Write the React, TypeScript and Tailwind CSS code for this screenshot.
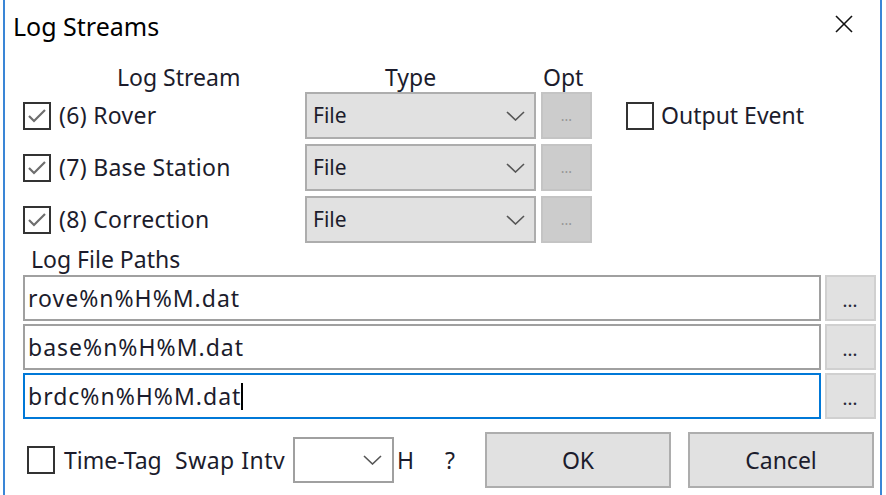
import React from "react";

const font = { fontFamily: '"Noto Sans", "Open Sans", sans-serif' };

function CheckBox({ checked }: { checked?: boolean }) {
    return (
        <div className="w-[28px] h-[28px] border-2 border-[#333333] bg-white flex items-center justify-center shrink-0">
            {checked && (
                <svg width="24" height="24" viewBox="0 0 24 24">
                    <polyline
                        points="4,12 9,17 20,6"
                        fill="none"
                        stroke="#6e6e6e"
                        strokeWidth="2.2"
                    />
                </svg>
            )}
        </div>
    );
}

function Chevron() {
    return (
        <svg width="19" height="10" viewBox="0 0 19 10">
            <polyline points="1,1 9.5,9 18,1" fill="none" stroke="#555555" strokeWidth="1.6" />
        </svg>
    );
}

function StreamRow({ label, last }: { label: string; last?: boolean }) {
    return (
        <div className="flex items-center h-[47px]">
            <div className="w-[300px] flex items-center pl-[18px] gap-[8px]">
                <CheckBox checked />
                <span className="text-[23px] text-[#1c1c2c] tracking-[0.3px]">{label}</span>
            </div>
            <div className="w-[231px] h-full bg-[#e1e1e1] border-2 border-[#adadad] flex items-center justify-between pl-[6px] pr-[9px]">
                <span className="text-[21px] text-[#1c1c2c]">File</span>
                <Chevron />
            </div>
            <div className="ml-[5px] w-[51px] h-full bg-[#cccccc] border-2 border-[#c4c4c4] flex items-center justify-center text-[14px] text-[#959595]">
                ...
            </div>
            {last && (
                <div className="ml-[34px] flex items-center gap-[7px]">
                    <CheckBox />
                    <span className="text-[23px] text-[#1c1c2c]">Output Event</span>
                </div>
            )}
        </div>
    );
}

function PathRow({ value, focused }: { value: string; focused?: boolean }) {
    return (
        <div className="flex h-[46px] pl-[18px]">
            <div
                className={
                    focused
                        ? "w-[798px] h-full bg-white border-2 border-[#0078d7] flex items-center pl-[3px]"
                        : "w-[798px] h-full bg-white border-2 border-[#a0a0a0] flex items-center pl-[3px]"
                }
            >
                <span className="text-[23px] text-[#1c1c2c] tracking-[1px]">{value}</span>
                {focused && <span className="w-[2px] h-[27px] bg-black" />}
            </div>
            <div className="ml-[4px] w-[51px] h-full bg-[#e1e1e1] border-2 border-[#d0d0d0] flex items-center justify-center pt-[6px] text-[14px] font-bold text-[#2a2a3a] tracking-[1px]">
                ...
            </div>
        </div>
    );
}

export default function App() {
    return (
        <div className="w-[886px] h-[495px] bg-white flex overflow-hidden" style={font}>
            <div className="w-[3px]" />
            <div className="w-[2px] bg-[#3a86d6]" />
            <div className="w-[875px] flex flex-col">
                <div className="h-[54px] flex items-center justify-between pl-[8px] pr-[27px]">
                    <span className="text-[25px] text-black">Log Streams</span>
                    <svg width="18" height="18" viewBox="0 0 18 18" className="mb-[6px]">
                        <line x1="1" y1="1" x2="17" y2="17" stroke="#111" strokeWidth="1.6" />
                        <line x1="17" y1="1" x2="1" y2="17" stroke="#111" strokeWidth="1.6" />
                    </svg>
                </div>
                <div className="h-[38px] flex items-end text-[23px] text-[#1c1c2c] leading-[30px]">
                    <div className="w-[300px] pl-[112px]">Log Stream</div>
                    <div className="w-[236px] pl-[80px]">Type</div>
                    <div className="pl-[2px]">Opt</div>
                </div>
                <div className="flex flex-col gap-[5px]">
                    <StreamRow label="(6) Rover" last />
                    <StreamRow label="(7) Base Station" />
                    <StreamRow label="(8) Correction" />
                </div>
                <div className="h-[32px] flex items-center pl-[26px] text-[23px] text-[#1c1c2c]">
                    Log File Paths
                </div>
                <div className="flex flex-col gap-[3px]">
                    <PathRow value="rove%n%H%M.dat" />
                    <PathRow value="base%n%H%M.dat" />
                    <PathRow value="brdc%n%H%M.dat" focused />
                </div>
                <div className="mt-[13px] h-[56px] flex items-center text-[23px] text-[#1c1c2c]">
                    <div className="w-[170px] pl-[22px] flex items-center gap-[9px]">
                        <CheckBox />
                        <span>Time-Tag</span>
                    </div>
                    <div className="w-[118px] tracking-[0.5px]">Swap Intv</div>
                    <div className="w-[101px] h-[46px] border-2 border-[#a0a0a0] bg-white flex items-center justify-end pr-[10px]">
                        <Chevron />
                    </div>
                    <div className="w-[51px] pl-[3px]">H</div>
                    <div className="w-[40px]">?</div>
                    <div className="w-[186px] h-full bg-[#e1e1e1] border-2 border-[#adadad] flex items-center justify-center">
                        OK
                    </div>
                    <div className="ml-[17px] w-[186px] h-full bg-[#e1e1e1] border-2 border-[#adadad] flex items-center justify-center">
                        Cancel
                    </div>
                </div>
            </div>
            <div className="w-[2px] bg-[#3a86d6]" />
        </div>
    );
}
